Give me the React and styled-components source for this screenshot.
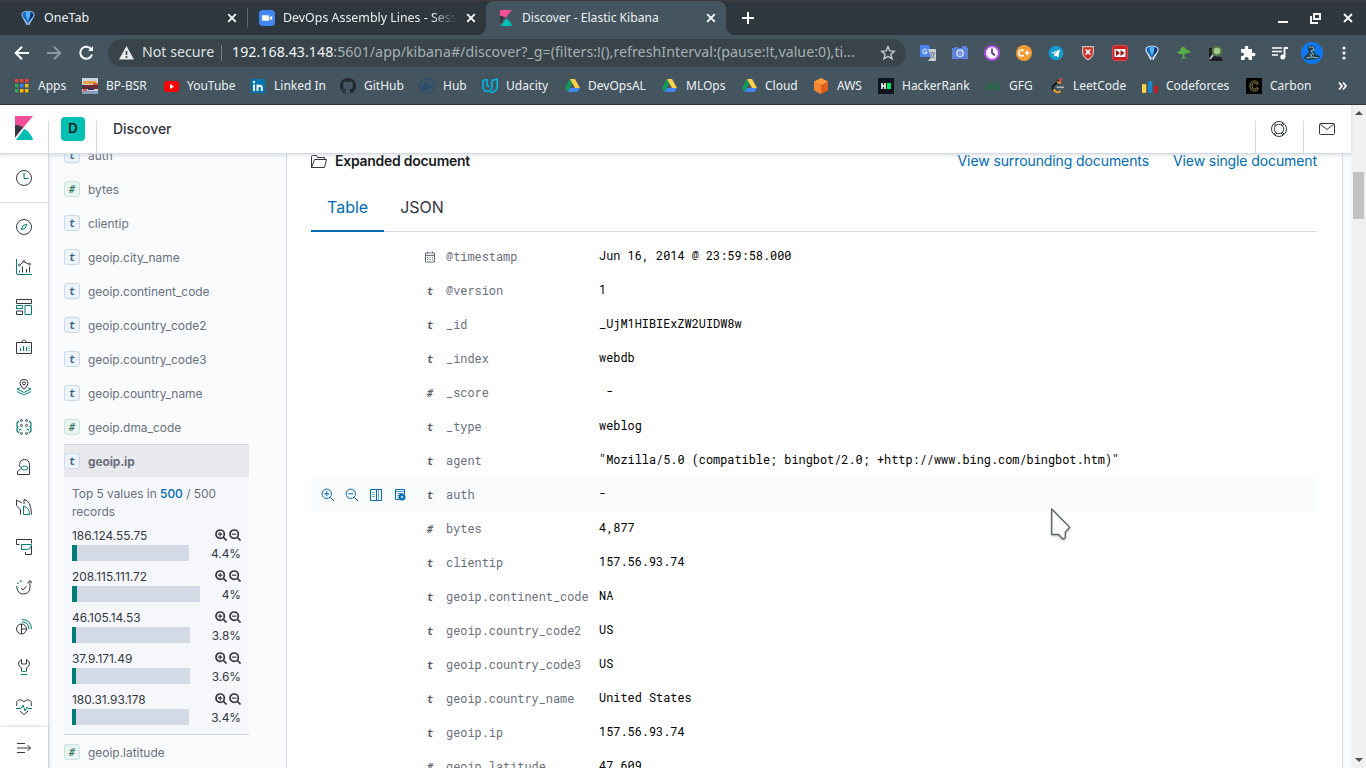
import React from 'react';
import styled, { createGlobalStyle } from 'styled-components';

const Global = createGlobalStyle`
  * { box-sizing: border-box; }
  html, body { margin: 0; padding: 0; width: 100%; height: 100%; overflow: hidden; }
  svg { display: block; flex: none; }
`;

const UI = "'Noto Sans', sans-serif";
const INTER = "Inter, 'Liberation Sans', sans-serif";
const MONO = "'Roboto Mono', 'Liberation Mono', monospace";

const Screen = styled.div`
  width: 1366px;
  height: 768px;
  display: flex;
  flex-direction: column;
  overflow: hidden;
  background: #fff;
`;

/* ---------- browser chrome ---------- */
const TabStrip = styled.div`
  height: 35px;
  flex: none;
  display: flex;
  align-items: stretch;
  background: #2d373d;
  border-top: 1px solid #413b3e;
  font: 13px ${UI};
  color: #eef0f1;
`;
const Tab = styled.div`
  position: relative;
  width: ${p => p.$w}px;
  padding-left: ${p => p.$pad}px;
  padding-right: 10px;
  display: flex;
  align-items: center;
  background: ${p => (p.$active ? '#455560' : 'transparent')};
  border-radius: 8px 8px 0 0;
  &::before, &::after {
    content: '';
    display: ${p => (p.$active ? 'block' : 'none')};
    position: absolute;
    bottom: 0;
    width: 8px;
    height: 8px;
  }
  &::before { left: -8px; background: radial-gradient(circle at 0 0, transparent 7.5px, #455560 8px); }
  &::after { right: -8px; background: radial-gradient(circle at 100% 0, transparent 7.5px, #455560 8px); }
`;
const TabIcon = styled.span`
  width: ${p => p.$w}px;
  flex: none;
`;
const TabTitle = styled.span`
  flex: 1;
  min-width: 0;
  margin-right: 6px;
  white-space: nowrap;
  font-size: ${p => p.$size || 12.5}px;
  line-height: 20px;
  mask-image: ${p => (p.$fade ? 'linear-gradient(90deg,#000 84%,transparent 98%)' : 'none')};
`;
const Separator = styled.i`
  width: 1px;
  height: 20px;
  align-self: center;
  background: #5a646a;
`;
const NewTab = styled.div`
  margin-left: 15px;
  display: flex;
  align-items: center;
`;
const WindowButtons = styled.div`
  margin-left: auto;
  padding-right: 10px;
  display: flex;
  align-items: center;
  gap: 17px;
`;
const Toolbar = styled.div`
  height: 36px;
  flex: none;
  display: flex;
  align-items: center;
  background: #455560;
  font-family: ${UI};
`;
const NavButtons = styled.div`
  width: 108px;
  padding-left: 14px;
  display: flex;
  gap: 16px;
`;
const Omnibox = styled.div`
  width: 798px;
  height: 28px;
  padding: 0 10px 0 11px;
  border-radius: 14px;
  display: flex;
  align-items: center;
  background: #38434a;
  color: #a7b0b5;
  font-size: 14.2px;
  line-height: 20px;
  white-space: nowrap;
`;
const Secure = styled.span`
  width: 73px;
  margin-left: 8px;
  padding-bottom: 2px;
  color: #dfe2e4;
`;
const OmniSep = styled.i`
  width: 1px;
  height: 16px;
  margin: 0 10px 0 6px;
  background: #748089;
`;
const Url = styled.span`
  flex: 1;
  padding-bottom: 2px;
  letter-spacing: .045px;
  b { font-weight: 400; color: #f2f4f5; }
`;
const Extensions = styled.div`
  flex: 1;
  padding-left: 6px;
  display: flex;
  align-items: center;
`;
const Ext = styled.span`
  width: 32px;
  height: 24px;
  flex: none;
  display: flex;
  align-items: center;
  justify-content: center;
`;
const Bookmarks = styled.div`
  height: 34px;
  flex: none;
  padding: 0 0 4px 15px;
  display: flex;
  align-items: center;
  background: #455560;
  border-bottom: 1px solid #2c383f;
  font: 12px ${UI};
  color: #eef1f2;
`;
const Bookmark = styled.div`
  width: ${p => p.$w}px;
  flex: none;
  display: flex;
  align-items: center;
  white-space: nowrap;
`;
const BookmarkIcon = styled.span`
  width: ${p => p.$w}px;
  flex: none;
`;

/* ---------- application ---------- */
const AppArea = styled.div`
  flex: 1;
  min-height: 0;
  display: flex;
  font-family: ${INTER};
`;
const AppMain = styled.div`
  width: 1351px;
  display: flex;
  flex-direction: column;
`;
const Header = styled.header`
  position: relative;
  z-index: 2;
  height: 49px;
  flex: none;
  display: flex;
  background: #fff;
  border-bottom: 1px solid #d3dae6;
  box-shadow: 0 2px 3px rgba(152,162,179,.25);
`;
const HeaderCell = styled.div`
  width: ${p => p.$w}px;
  padding-top: ${p => p.$top}px;
  padding-left: ${p => p.$left}px;
`;
const HeaderLine = styled.i`
  width: 1px;
  height: 32px;
  margin-top: 16px;
  background: #d3dae6;
`;
const Space = styled.div`
  width: 24px;
  height: 24px;
  border-radius: 4px;
  background: #00bfb3;
  color: #000;
  font-size: 13px;
  font-weight: 500;
  line-height: 23px;
  text-align: center;
`;
const Crumb = styled.div`
  flex: 1;
  padding-left: 16px;
  line-height: 48px;
  font-size: 14px;
  font-weight: 500;
  letter-spacing: -.05px;
  color: #343741;
`;
const Body = styled.div`
  flex: 1;
  min-height: 0;
  display: flex;
  background: #fafbfd;
`;
const Rail = styled.nav`
  position: relative;
  width: 49px;
  flex: none;
  display: flex;
  flex-direction: column;
  background: #fff;
  border-right: 1px solid #d3dae6;
  box-shadow: 1px 0 3px rgba(152,162,179,.2);
`;
const RailCell = styled.div`
  height: ${p => p.$h || 40}px;
  flex: none;
  display: flex;
  align-items: center;
  justify-content: center;
`;
const RailGroup = styled.div`
  border-top: 1px solid #d3dae6;
  padding-top: 4px;
`;
const RailFoot = styled.div`
  height: 41px;
  display: flex;
  align-items: center;
  justify-content: center;
  box-shadow: 0 -1px 3px rgba(120,130,150,.28);
`;
const Sidebar = styled.aside`
  width: 237px;
  overflow: hidden;
  padding: 0 37px 0 15px;
`;
const FieldList = styled.div`
  margin-top: -16px;
`;
const Field = styled.div`
  height: ${p => (p.$selected ? 33 : 34)}px;
  display: flex;
  align-items: center;
  gap: 8px;
  font-size: 11.95px;
  line-height: 18px;
  color: #69707d;
  font-weight: ${p => (p.$selected ? 700 : 400)};
  letter-spacing: ${p => (p.$selected ? '-.1px' : '0')};
  background: ${p => (p.$selected ? '#e9eaee' : 'transparent')};
  border-top: ${p => (p.$selected ? '1px solid #cfd4e3' : '0')};
`;
const FieldName = styled.span`
  padding-top: 1px;
`;
const Token = styled.span`
  width: 16px;
  height: 16px;
  border-radius: 3px;
  border: 1px solid ${p => (p.$num ? '#c7e5dd' : '#c8daec')};
  background: ${p => (p.$num ? '#eaf5f1' : '#edf3f9')};
  color: ${p => (p.$num ? '#387765' : '#39658e')};
  font: italic 700 11px/13px 'Roboto Mono', 'DejaVu Sans', sans-serif;
  text-align: center;
`;
const Details = styled.div`
  height: 258px;
  padding: 8px;
  background: #f5f7fb;
  border-bottom: 1px solid #cdd6e4;
  color: #343741;
  font-size: 11.9px;
`;
const Summary = styled.div`
  line-height: 18px;
  color: #69707d;
  b { font-weight: 500; color: #006bb4; }
`;
const Bucket = styled.div`
  height: 41px;
  padding-top: 5px;
`;
const BucketRow = styled.div`
  height: 18px;
  display: flex;
  align-items: center;
  justify-content: space-between;
`;
const Actions = styled.span`
  display: flex;
  gap: 2px;
`;
const Bar = styled.div`
  height: 16px;
  background: #d3dae6;
  &::before {
    content: '';
    display: block;
    height: 16px;
    width: ${p => p.$fill}px;
    background: #017d73;
  }
`;
const Panel = styled.main`
  width: 1057px;
  flex: none;
  padding: 0 25px 0 24px;
  overflow: hidden;
  background: #fff;
  border: solid #d3dae6;
  border-width: 0 1px;
`;
const DocHead = styled.div`
  height: 38px;
  display: flex;
  font-size: 14px;
  line-height: 14px;
`;
const DocTitle = styled.div`
  flex: 1;
  display: flex;
  gap: 8px;
  font-weight: 600;
  letter-spacing: -.27px;
  color: #1a1c21;
`;
const DocLink = styled.a`
  margin-left: 24px;
  letter-spacing: -.1px;
  color: #006bb4;
`;
const Tabs = styled.div`
  height: 40px;
  display: flex;
  border-bottom: 1px solid #d3dae6;
`;
const DocTab = styled.div`
  height: 40px;
  padding: 0 16px;
  font-size: 16px;
  line-height: 31px;
  color: ${p => (p.$active ? '#006bb4' : '#343741')};
  border-bottom: ${p => (p.$active ? '2px solid #006bb4' : '0')};
`;
const Rows = styled.div`
  padding-top: 8px;
`;
const Row = styled.div`
  height: 34px;
  display: flex;
  align-items: center;
  font: 11.88px/18px ${MONO};
  color: #000;
  background: ${p => (p.$hover ? '#fafbfd' : 'transparent')};
`;
const RowActions = styled.div`
  width: 111px;
  padding-left: 10px;
  display: flex;
  gap: 10px;
`;
const TypeIcon = styled.span`
  width: 16px;
  margin-right: 8px;
  padding-bottom: 1px;
  display: flex;
  justify-content: center;
  color: #535966;
  font: italic 700 11px/16px 'Roboto Mono', 'DejaVu Sans', sans-serif;
`;
const Key = styled.span`
  width: 153px;
  white-space: nowrap;
  color: #69707d;
  padding-bottom: 1px;
`;
const Value = styled.span`
  white-space: pre;
  padding-bottom: 3px;
`;
const ScrollTrack = styled.div`
  width: 15px;
  display: flex;
  flex-direction: column;
  align-items: center;
  background: #f1f1f1;
`;
const ScrollArrow = styled.i`
  width: 0;
  height: 0;
  margin: ${p => (p.$down ? '0 0 6px' : '6px 0 0')};
  border: 4px solid transparent;
  border-${p => (p.$down ? 'top' : 'bottom')}-color: #505050;
  border-${p => (p.$down ? 'bottom' : 'top')}-width: 0;
`;
const Thumb = styled.div`
  width: 11px;
  height: 47px;
  margin: 57px 0 auto;
  background: #c1c1c1;
`;
const Cursor = styled.div`
  position: absolute;
  z-index: 5;
  left: 1050px;
  top: 507px;
  filter: drop-shadow(0 1px 1px rgba(0,0,0,.25));
`;

/* ---------- drawings ---------- */
const Svg = ({ s = 16, w = s, h = s, vb = '0 0 16 16', children, ...rest }) => (
  <svg width={w} height={h} viewBox={vb} fill="none" {...rest}>{children}</svg>
);
const Close = () => <Svg s={10} vb="0 0 10 10" stroke="#fff" strokeWidth="1.8"><path d="M1.200 1.200 8.800 8.800M8.800 1.200 1.200 8.800" /></Svg>;
const Balloon = ({ ring }) => (
  <Svg>
    <path d="M8 .7C4.600.7 1.400 2 1.400 4.600c0 3 3.600 6.500 5 10.400h3.200c1.400-3.900 5-7.400 5-10.400C14.600 2 11.400.7 8 .7Z" fill={ring ? '#eef5fb' : '#9cc4e6'} />
    <path d="M8 1.500C5 1.500 2.400 2.600 2.400 4.700 2.400 7 6 9.500 7 12.500h2c1-3 4.600-5.500 4.600-7.800C13.600 2.600 11 1.500 8 1.500Z" fill="#1564c0" />
    <path d="M5.500 2.200C6.800 1.500 9 1.500 10.500 2.200 10.800 5 9 8.500 8 11 7 8.500 5.200 5 5.500 2.200Z" fill="#4fb4f5" />
    <path d="M10.500 2.200c1.700.5 2.800 1.300 2.800 2.600C13.300 7 10 9.500 8.700 11.800 9.800 8.500 10.900 5 10.500 2.200Z" fill="#0a2f6b" />
    <path d="M7 13h2v2H7z" fill="#7c93a8" />
  </Svg>
);
const Zoom = () => <Svg><rect width="16" height="16" rx="4" fill="#4285f4" /><path d="M3 5.300h6.200q1 0 1 1v4.400H4q-1 0-1-1ZM10.800 7.400 13.200 5.600v5l-2.400-1.800Z" fill="#fff" /></Svg>;
const Kibana = ({ w, h }) => (
  <Svg w={w} h={h} vb="0 0 24 32"><path d="M0 0v28.800L24 0Z" fill="#f04e98" /><path d="M0 11.500v17.300L10.800 15A24 24 0 0 0 0 11.500Z" fill="#343741" /><path d="M12.400 16.900 1.200 32H24a24 24 0 0 0-11.600-15.100Z" fill="#00bfb3" /></Svg>
);
const Drive = () => <Svg w={15} h={15} vb="0 0 15 15"><path d="M5 1 0 10l2.500 4L7.500 5.300Z" fill="#0f9d58" /><path d="M5 1h5l5 9h-5Z" fill="#ffcf48" /><path d="M5 10h10l-2.500 4h-10Z" fill="#4285f4" /></Svg>;
const Apps = () => (
  <Svg s={14} vb="0 0 14 14">
    {['#ea4335', '#ea4335', '#ea4335', '#34a853', '#4285f4', '#fbbc05', '#34a853', '#fbbc05', '#fbbc05'].map((c, i) => (
      <rect key={i} x={(i % 3) * 5} y={Math.floor(i / 3) * 5} width="3.400" height="3.400" fill={c} />
    ))}
  </Svg>
);
const bookmarks = [
  ['Apps', 67, 23, <Apps />],
  ['BP-BSR', 82, 24, <Svg><path fill="#cfd3dd" d="M0 0h16v16H0z" /><path fill="#e9a13b" d="M1 3h13v3H1z" /><path fill="#6d2830" d="M0 7h16v4H0z" /><path fill="#3b3650" d="M0 8h3v2H0zM6 10h6v2H6z" /><path fill="#d85c4b" d="M1 11h4v2H1zM11 5h5v2h-5z" /><path fill="#8c9cb8" d="M0 13h16v3H0z" /></Svg>],
  ['YouTube', 87, 23, <Svg w={15} h={16} vb="0 0 15 16"><rect y="3" width="15" height="11" rx="3" fill="#f00" /><path d="M6 6v5l4-2.500Z" fill="#fff" /></Svg>],
  ['Linked In', 89, 23, <Svg s={14} vb="0 0 14 14"><path fill="#0077b5" d="M0 0h14v14H0z" /><path d="M3 5.500V12M6.500 12V5.500M6.500 9c0-3 4.300-3 4.300 0v3" stroke="#fff" strokeWidth="1.900" /><circle cx="3" cy="3" r="1.200" fill="#fff" /></Svg>],
  ['GitHub', 79, 24, <Svg><path fill="#24292e" d="M8 0C3.580 0 0 3.580 0 8c0 3.540 2.290 6.530 5.470 7.590.4.070.55-.17.55-.38 0-.19-.01-.82-.01-1.490-2.010.37-2.530-.49-2.690-.94-.09-.23-.48-.94-.82-1.130-.28-.15-.68-.52-.01-.53.63-.01 1.080.58 1.230.82.72 1.210 1.870.87 2.330.66.070-.52.28-.87.51-1.070-1.780-.2-3.640-.89-3.640-3.950 0-.87.31-1.590.82-2.150-.08-.2-.36-1.020.08-2.120 0 0 .67-.21 2.200.82a7.500 7.500 0 0 1 4 0c1.530-1.040 2.200-.82 2.200-.82.44 1.100.16 1.920.08 2.120.51.56.82 1.270.82 2.150 0 3.070-1.870 3.750-3.650 3.950.29.25.54.73.54 1.480 0 1.070-.01 1.930-.01 2.200 0 .21.15.46.55.38A8 8 0 0 0 16 8c0-4.420-3.580-8-8-8Z" /></Svg>],
  ['Hub', 63, 24, <Svg><circle cx="8" cy="8" r="7.400" stroke="#2b5069" strokeWidth="1.200" /><path d="M2.500 8.300h8.200c1 0 1-1.500 1-2 1 .3 1.300 1 2.300 1.200-.5 1.300-1.800 1.200-2 1.200C11 11.500 9 12.800 6.500 12.500 4 12.500 2.500 11 2.500 8.300ZM3.500 6.300h6.800v1.500H3.500zM5.500 4.600h3v1.500h-3z" fill="#24506f" /></Svg>],
  ['Udacity', 83, 24, <Svg><path d="M5 1.200 1 2.500v6.200c0 6.500 9 6.200 9-.2V1.600M7 9c-3-1-2-4-2-7.800M8 14.300c4 .3 7.200-2 7.200-5.800V1L10 2.500" stroke="#02b3e4" strokeWidth="1.700" /></Svg>],
  ['DevOpsAL', 97, 23, <Drive />],
  ['MLOps', 80, 24, <Drive />],
  ['Cloud', 71, 23, <Drive />],
  ['AWS', 65, 24, <Svg><path d="M8 0 15 3.500 8 7.500 1 3.500Z" fill="#ff9a3c" /><path d="M1 3.500 8 7.500V16l-7-3.500Z" fill="#f58634" /><path d="m15 3.500-7 4V16l7-3.500Z" fill="#e05f1c" /></Svg>],
  ['HackerRank', 107, 24, <Svg><path fill="#0d141e" d="M0 0h16v16H0z" /><path d="M4 5v6M7 5v6M4 8h3" stroke="#fff" strokeWidth="1.600" /><path fill="#00ea64" d="M9 5h4v6H9z" /></Svg>],
  ['GFG', 66, 24, <Svg w={15} h={16} vb="0 0 15 16"><path d="M1 5h3q3 1 2 4-1 3-4 2.500-1.500-1-1.500-3H6M14 5h-3q-3 1-2 4 1 3 4 2.500 1.500-1 1.500-3H9M6 8.500h3" stroke="#1b7446" strokeWidth="1.200" /></Svg>],
  ['LeetCode', 91, 22, <Svg w={14} h={16} vb="0 0 14 16"><path d="M8.500 2 2.500 7.500q-2 2 0 4.300" stroke="#151719" strokeWidth="1.900" /><path d="m2.500 11.500 2 2q2.500 2 5-.5M6 4.500q2-1 4 1" stroke="#f3a12b" strokeWidth="1.800" /><path d="M5.500 9.300h7.500" stroke="#b3b3b3" strokeWidth="1.600" /><circle cx="9.500" cy="2" r="1.900" fill="#c94840" /></Svg>],
  ['Codeforces', 104, 24, <Svg><rect y="6" width="4.300" height="9" rx="1" fill="#f9cf4e" /><rect x="6" y="3" width="4.300" height="12" rx="1" fill="#1989c9" /><rect x="11.800" y="8" width="4.200" height="7" rx="1" fill="#bb2028" /></Svg>],
  ['Carbon', 92, 24, <Svg><path fill="#000" d="M0 0h16v16H0z" /><path d="M12 6V4.500Q11 3 8.500 3 4 3 4 8t4.500 5Q11 13 12 11.500V10h-2q0 1.200-1.500 1.200Q6 11.200 6 8t2.500-3.200Q10 4.800 10 6Z" stroke="#94882a" /></Svg>],
];

const extIcons = [
  <Svg><path d="M0 0h9l3 12H1Q0 12 0 11Z" fill="#4b84f0" /><path d="M8 4h7q1 0 1 1v10q0 1-1 1H8l3-4Z" fill="#c8cdd3" /><path d="M7 5.200A2.300 2.300 0 1 0 7 7.800V7H5" stroke="#fff" /><path d="M10 8h5M12.500 7v1M14.500 8q-1 4-3.500 5M11 9q1 3 4 4" stroke="#69757f" strokeWidth=".9" /></Svg>,
  <Svg><path d="M0 3h3V2h3v1h4V1h5v2h1v11H0Z" fill="#5e83dd" /><circle cx="8" cy="8.300" r="3.200" stroke="#eef2fc" strokeWidth="1.200" /><path d="M8 7v2.500M7 8.200h2" stroke="#b7c8f2" /></Svg>,
  <Svg><circle cx="8" cy="8" r="7" fill="#f7f3fb" stroke="#a849e0" strokeWidth="2" /><path d="M8 3.500V8l3 2.300" stroke="#4c2869" strokeWidth="1.600" /></Svg>,
  <Svg><circle cx="8" cy="8" r="8" fill="#f29b34" /><path d="M7.600 6Q6.800 5 5.500 5C2 5 2 11 5.500 11q1.300 0 2.100-1M9 8h4.500M11.300 5.800v4.400" stroke="#fff" strokeWidth="1.600" /></Svg>,
  <Svg><circle cx="8" cy="8" r="7.300" fill="#139bd0" /><path d="m3 8 9-3.500-1.800 8-2.700-2-1.500 1.400L6 9l4-3-5 2.600Z" fill="#fff" /></Svg>,
  <Svg><path d="M2 1h12v7q-1 5-6 7.500Q3 13 2 8Z" fill="#c9c3c3" /><path d="M3.200 2.200h9.600V8Q12 12 8 14 4 12 3.200 8Z" fill="#d12f2a" /><path d="m5.700 4.500 4.600 5M10.300 4.500l-4.600 5" stroke="#fff" strokeWidth="1.800" /></Svg>,
  <Svg><rect x=".5" y=".5" width="15" height="15" rx="2.500" fill="#c72027" stroke="#e24848" /><path fill="#fff" d="M2.500 4h11v8h-11z" /><path d="M4 5v6l4-3ZM8.500 5v6l4-3Z" fill="#951217" /></Svg>,
  <Balloon ring />,
  <Svg><path d="M1.500 7 4 5.500 5 3l2-1.500L9.500 3l1.500 2 2 .5 2 2-3 .5-3.500 1V12l2.500 1.500H4.500L7 12V9.500L4 9 1.500 8Z" fill="#55ad46" /></Svg>,
  <Svg><path d="M1 3h3v8l9 1 2 4H2l-1-2Z" fill="#1b1e20" /><path d="m5 10-3 4" stroke="#b6bdc2" strokeWidth="2" /><circle cx="9" cy="6" r="4.300" fill="#a8ca8b" stroke="#527948" strokeWidth="2" /></Svg>,
  <Svg><path fill="#fff" d="M1 4h4q-1-3 1.500-3.200Q9 1 8 4h4v4q3.500-1 3.500 1.500T12 11v4H8.600q.3-3-2-3t-2 3H1v-3.800q3 .2 3-1.900T1 7.500Z" /></Svg>,
  <Svg><path d="M0 3h10M0 6.500h10M0 10h6" stroke="#fff" strokeWidth="1.700" /><path d="M12.500 12V3H16" stroke="#fff" strokeWidth="1.800" /><circle cx="10.800" cy="12" r="2.500" fill="#fff" /></Svg>,
  <Svg s={22} vb="0 0 22 22"><circle cx="11" cy="11" r="11" fill="#0c78f3" /><path d="M7 4 11 3l3 2-1 5 3 3 3 1-2 3-10 1-4-1 1-3 4-3-1-4Z" fill="#26373f" /><path d="m8 5 4 0 1 3-3 1 3 4M5 16l6-1 6 1M9 12l2 2" stroke="#83c2ca" strokeWidth="1.100" /></Svg>,
  <Svg><circle cx="8" cy="3" r="1.500" fill="#fff" /><circle cx="8" cy="8" r="1.500" fill="#fff" /><circle cx="8" cy="13" r="1.500" fill="#fff" /></Svg>,
];

const D = '#343741';
const G = '#017d73';
const railIcons = [
  <><circle cx="8" cy="8" r="7.500" stroke={D} /><path d="m10.800 5.200-1.600 4-4 1.600 1.600-4Z" stroke={G} strokeLinejoin="round" /></>,
  <><path d="M.5 0v14q0 1.500 1.500 1.500h14" stroke={G} /><path d="M3.500 13.500v-2M6.500 13.500v-6M10.500 13.500V10M13.500 13.500v-6M3.500 6.500l4-4 6 3" stroke={D} /><g fill="#fff" stroke={D} strokeWidth=".8"><circle cx="3.300" cy="6" r="1" /><circle cx="8" cy="2.300" r="1" /><circle cx="13.700" cy="5" r="1" /></g></>,
  <><path d="M.5.5h15v4H.5ZM.5 12h6v3.500h-6Z" stroke={D} /><path d="M.5 6.500h6v3h-6ZM9 6.500h6.500v9H9Z" stroke={G} /></>,
  <><path d="M.5 3.500h15v11H.5ZM5 3.500l3-3 3 3" stroke={D} /><path d="M4.500 12V9M7.500 12V7M10.500 12V8M13 7v1M13 9v1M13 11v1" stroke={G} /></>,
  <><path d="M8 10.500Q4 6.500 4 4.300a4 4 0 0 1 8 0Q12 6.500 8 10.500Z" stroke={D} /><circle cx="8" cy="4.300" r="1.500" stroke={D} /><path d="m4 9-3 1 7 3.500 7-3.500-3-1M1 12.500 8 16l7-3.500" stroke={G} /></>,
  <><g stroke={D}><circle cx="5.500" cy="1.500" r="1" /><circle cx="10.500" cy="1.500" r="1" /><circle cx="5.500" cy="6.500" r="1" /><circle cx="10.500" cy="6.500" r="1" /><circle cx="5.500" cy="14.500" r="1" /><circle cx="10.500" cy="14.500" r="1" /></g><path d="M3 2 1 4v3l1 1-1 1v3l2 2M13 2l2 2v3l-1 1 1 1v3l-2 2M3 11l2.500-1M13 11l-2.500-1" stroke={G} strokeWidth="1.200" /></>,
  <><path d="M4.500 8.500Q3.500 7 3.500 5.500 4 .5 8.500.5t5 5v10h-12v-3l3-2.500" stroke={D} /><path d="M5 9q1-2 3.500-2T12 9q0 2-3.500 2T5 9Z" stroke={G} /></>,
  <><path d="M.5 6.500V1l5.500 3M4.500 15.500V11l-4-4.500M8 .5q7 1 7.500 15M8 .5V5" stroke={D} /><path d="M7.500 7v8.500h6q0-7-6-8.500Z" stroke={G} /></>,
  <><path d="M3.500 5.500h-3v-5h15v4M9.500 13v2.500h6v-9" stroke={D} /><path d="M5.500 5.500h10q-1 5-5 5h-5Z" stroke={G} /></>,
  <><path d="M1 9q1 6 6 6 7 0 7-7V2.500M11.500 4.500l2.500-3 2.500 3M5 9l2 2 3.500-4" stroke={D} /><path d="M.8 9V7M1.500 5l1-1.500M4 2.500 6 1.700" stroke={G} strokeWidth="1.200" /></>,
  <><circle cx="5.500" cy="10" r="5" stroke={D} /><path d="M5.500 5v5h5M5.500 10v5" stroke={D} /><path d="M6 .5q9 0 9.500 9.500M6 3q6.500 0 7 7" stroke={G} /></>,
  <><path d="M5.500 12.500V9Q2 7 2.500 4 3 1.500 5.500.5V5h5V.5Q13 1.500 13.500 4q.5 3-3 5v3.500" stroke={D} /><path d="M6.500 12.500h3M5 15.500h6" stroke={G} /></>,
  <><path d="M.7 7Q0 .8 4 .8 7 .8 8 3 9 .8 12 .8 16 .8 15.300 7M4 12l4 3.500 4-3.500" stroke={D} /><path d="M0 9.500h5L7 6l2 6 2-4 1.500 1.500H16" stroke={G} /></>,
];
const PlusLens = ({ minus, bold, color }) => (
  <Svg s={bold ? 12 : 14} vb={bold ? '0 0 13.500 13.500' : '0 0 14 14'} stroke={color} strokeWidth={bold ? 1.9 : 1}>
    <circle cx="5.800" cy="5.800" r="4.700" /><path d={minus ? 'M3.300 5.800h5' : 'M3.300 5.800h5M5.800 3.300v5'} strokeWidth={bold ? 1.3 : 1} /><path d="M9.300 9.300 13 13" />
  </Svg>
);

const fields = ['auth', '#bytes', 'clientip', 'geoip.city_name', 'geoip.continent_code', 'geoip.country_code2', 'geoip.country_code3', 'geoip.country_name', '#geoip.dma_code'];
const buckets = [['186.124.55.75', '4.4%', 117, 5], ['208.115.111.72', '4%', 128, 5], ['46.105.14.53', '3.8%', 118, 4], ['37.9.171.49', '3.6%', 118, 4], ['180.31.93.178', '3.4%', 117, 4]];
const docRows = [
  ['d', '@timestamp', 'Jun 16, 2014 @ 23:59:58.000'],
  ['t', '@version', '1'],
  ['t', '_id', '_UjM1HIBIExZW2UIDW8w'],
  ['t', '_index', 'webdb'],
  ['#', '_score', ' - '],
  ['t', '_type', 'weblog'],
  ['t', 'agent', '"Mozilla/5.0 (compatible; bingbot/2.0; +http://www.bing.com/bingbot.htm)"'],
  ['t', 'auth', '-'],
  ['#', 'bytes', '4,877'],
  ['t', 'clientip', '157.56.93.74'],
  ['t', 'geoip.continent_code', 'NA'],
  ['t', 'geoip.country_code2', 'US'],
  ['t', 'geoip.country_code3', 'US'],
  ['t', 'geoip.country_name', 'United States'],
  ['t', 'geoip.ip', '157.56.93.74'],
  ['#', 'geoip.latitude', '47.609'],
];

const FieldRow = ({ name, selected }) => {
  const num = name[0] === '#';
  return <Field $selected={selected}><Token $num={num}>{num ? '#' : 't'}</Token><FieldName>{num ? name.slice(1) : name}</FieldName></Field>;
};

export default function App() {
  return (
    <Screen>
      <Global />
      <TabStrip>
        <Tab $w={247} $pad={20}><TabIcon $w={24}><Balloon /></TabIcon><TabTitle>OneTab</TabTitle><Close /></Tab>
        <Separator />
        <Tab $w={238} $pad={11}><TabIcon $w={24}><Zoom /></TabIcon><TabTitle $fade $size={12.4}>DevOps Assembly Lines - Sessio</TabTitle><Close /></Tab>
        <Tab $w={240} $pad={14} $active><TabIcon $w={22}><Kibana w={12} h={16} /></TabIcon><TabTitle $size={12.1}>Discover - Elastic Kibana</TabTitle><Close /></Tab>
        <NewTab><Svg s={14} vb="0 0 14 14" stroke="#fff" strokeWidth="2"><path d="M7 1v12M1 7h12" /></Svg></NewTab>
        <WindowButtons>
          <Svg stroke="#f4f5f5" strokeWidth="2"><path d="M4 12h10" /></Svg>
          <Svg stroke="#f4f5f5" strokeWidth="2"><path d="M7 4h6v5H7ZM4 6v7h7" /></Svg>
          <Svg stroke="#f4f5f5" strokeWidth="2"><path d="m4 4 8 8M12 4l-8 8" /></Svg>
        </WindowButtons>
      </TabStrip>
      <Toolbar>
        <NavButtons>
          <Svg stroke="#fff" strokeWidth="2"><path d="M15 8H2M8 1.700 1.700 8 8 14.300" /></Svg>
          <Svg stroke="#8c979e" strokeWidth="2"><path d="M1 8h13M8 1.700 14.300 8 8 14.300" /></Svg>
          <Svg stroke="#fff" strokeWidth="2"><path d="M13.500 4.800A6 6 0 1 0 14 9.500" /><path d="M14 1v5H9" fill="#fff" stroke="none" transform="translate(1 0)" /></Svg>
        </NavButtons>
        <Omnibox>
          <Svg w={15} h={14} vb="0 0 15 14"><path d="M7.500 0 15 13.500H0Z" fill="#e8eaeb" /><path d="M7.500 5v4M7.500 10v2" stroke="#38434a" strokeWidth="1.600" /></Svg>
          <Secure>Not secure</Secure><OmniSep />
          <Url><b>192.168.43.148</b>:5601/app/kibana#/discover?_g=(filters:!(),refreshInterval:(pause:!t,value:0),ti...</Url>
          <Svg stroke="#c5cacd" strokeWidth="1.400"><path d="m8 1.700 1.800 4.200 4.600.4-3.500 3 1.100 4.500L8 11.400l-4 2.400 1.100-4.500-3.500-3 4.600-.4Z" /></Svg>
        </Omnibox>
        <Extensions>{extIcons.map((icon, i) => <Ext key={i}>{icon}</Ext>)}</Extensions>
      </Toolbar>
      <Bookmarks>
        {bookmarks.map(([name, w, iw, icon]) => <Bookmark key={name} $w={w}><BookmarkIcon $w={iw}>{icon}</BookmarkIcon>{name}</Bookmark>)}
        <Svg s={10} vb="0 0 10 10" stroke="#fff" strokeWidth="1.700"><path d="m1 1.500 3 3.500-3 3.500M5 1.500 8 5 5 8.500" /></Svg>
      </Bookmarks>
      <AppArea>
        <AppMain>
          <Header>
            <HeaderCell $w={48} $top={11} $left={15}><Kibana w={18} h={24} /></HeaderCell><HeaderLine />
            <HeaderCell $w={47} $top={12} $left={12}><Space>D</Space></HeaderCell><HeaderLine />
            <Crumb>Discover</Crumb>
            <HeaderLine />
            <HeaderCell $w={47} $top={16} $left={15}><Svg stroke={D}><circle cx="8" cy="8" r="7.500" /><circle cx="8" cy="8" r="4.700" /><path d="m2.500 3 2 2M3.500 2l2 2M11 5l2-2M10 4l2-2M5 11l-2 2M6 12l-2 2M11 11l2 2M10 12l2 2" /></Svg></HeaderCell>
            <HeaderLine />
            <HeaderCell $w={47} $top={16} $left={15}><Svg stroke={D}><rect x=".5" y="2.500" width="15" height="11" rx="1" /><path d="m1 3 7 5.500L15 3" /></Svg></HeaderCell>
          </Header>
          <Body>
            <Rail>
              <RailCell $h={48}><Svg><circle cx="8" cy="8" r="7.500" stroke={D} /><path d="M8 3v5.500h4.500" stroke={G} /></Svg></RailCell>
              <RailGroup>{railIcons.map((icon, i) => <RailCell key={i}><Svg>{icon}</Svg></RailCell>)}</RailGroup>
              <RailFoot><Svg stroke={D}><path d="M1 3.500h8M1 8h13.500M1 12.500h8M11.500 5l3 3-3 3" /></Svg></RailFoot>
            </Rail>
            <Sidebar>
              <FieldList>
                {fields.map(f => <FieldRow key={f} name={f} />)}
                <FieldRow name="geoip.ip" selected />
                <Details>
                  <Summary>Top 5 values in <b>500</b> / 500<br />records</Summary>
                  {buckets.map(([ip, pct, w, fill]) => (
                    <Bucket key={ip}>
                      <BucketRow>{ip}<Actions><PlusLens bold color={D} /><PlusLens bold minus color={D} /></Actions></BucketRow>
                      <BucketRow><Bar $fill={fill} style={{ width: w }} />{pct}</BucketRow>
                    </Bucket>
                  ))}
                </Details>
                <FieldRow name="#geoip.latitude" />
              </FieldList>
            </Sidebar>
            <Panel>
              <DocHead>
                <DocTitle><Svg stroke={D}><path d="M.5 13.500v-11q0-1 1-1h4l1 2h7V5.500M.5 13.500l3-8h12l-2 8Z" /></Svg>Expanded document</DocTitle>
                <DocLink>View surrounding documents</DocLink>
                <DocLink>View single document</DocLink>
              </DocHead>
              <Tabs><DocTab $active>Table</DocTab><DocTab>JSON</DocTab></Tabs>
              <Rows>
                {docRows.map(([type, key, value]) => (
                  <Row key={key} $hover={key === 'auth'}>
                    <RowActions>
                      {key === 'auth' && <>
                        <PlusLens color="#006bb4" /><PlusLens minus color="#006bb4" />
                        <Svg s={14} vb="0 0 14 14" stroke="#006bb4"><path d="M1.500 1.500h11v11h-11ZM7.500 1.500v11" /><path d="M9.500 1.500v11M3 4.500h3M3 6.500h3M3 8.500h3" opacity=".55" /></Svg>
                        <Svg s={14} vb="0 0 14 14" stroke="#006bb4"><path d="M6 11.500H2.500v-10h9V6" /><path d="M2.500 3.500h9M4.500 5.500h5M4.500 7.500h2M4.500 9.500h1" opacity=".7" /><circle cx="9" cy="9" r="3.500" fill="#006bb4" stroke="none" /><path d="M7.500 9h3M9 7.500v3" stroke="#fff" strokeWidth=".8" /></Svg>
                      </>}
                    </RowActions>
                    <TypeIcon>
                      {type === 'd' ? <Svg s={12} vb="0 0 12 12" stroke="#69707d"><path d="M1.500 2h9v9h-9ZM1.500 4.500h9M3.500.5V2M8.500.5V2" /><path d="M3 6.500h1M5.500 6.500h1M8 6.500h1M3 8.500h1M5.500 8.500h1M8 8.500h1" /></Svg> : type}
                    </TypeIcon>
                    <Key>{key}</Key>
                    <Value>{value}</Value>
                  </Row>
                ))}
              </Rows>
            </Panel>
          </Body>
        </AppMain>
        <ScrollTrack><ScrollArrow /><Thumb /><ScrollArrow $down /></ScrollTrack>
      </AppArea>
      <Cursor>
        <Svg w={22} h={34} vb="0 0 22 34" stroke="#606667" strokeWidth="1.400" strokeLinejoin="round"><path d="M1.700 2v25.500h7l3.500 4q3 1 3-1.500l.2-4.800 4.300-5Z" fill="#fdfdfd" /></Svg>
      </Cursor>
    </Screen>
  );
}
